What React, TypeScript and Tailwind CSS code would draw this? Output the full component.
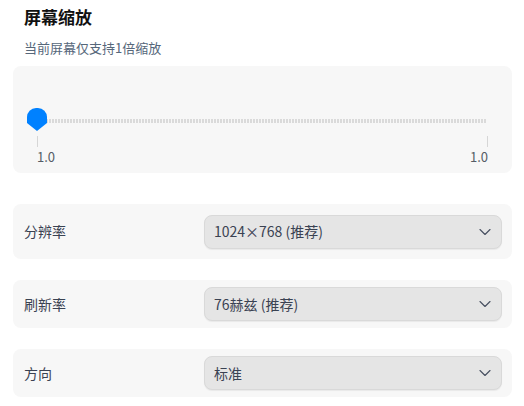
import { ChevronDown } from "lucide-react";

const font = { fontFamily: '"Noto Sans CJK SC", "Noto Sans", sans-serif' };

function SelectRow({ label, value, tall }: { label: string; value: string; tall?: boolean }) {
  return (
    <div
      className={`flex items-center rounded-lg bg-[#f7f7f7] pl-[11px] pr-[10px] ${
        tall ? "h-[55px]" : "h-[48px]"
      }`}
    >
      <div className="w-[180px] text-[14px] text-[#3a4252]">{label}</div>
      <button className="flex h-[34px] flex-1 items-center justify-between rounded-lg border border-[#d9d9d9] bg-[#e5e5e5] pl-[9px] pr-[6px] text-[14px] text-[#3a4252] shadow-[0_1px_1px_rgba(0,0,0,0.06)]">
        <span>{value}</span>
        <ChevronDown className="size-[20px] text-[#4a5263]" strokeWidth={1.4} />
      </button>
    </div>
  );
}

function ScaleSlider() {
  return (
    <div className="h-[107px] rounded-lg bg-[#f7f7f7] px-[24px] pt-[42px]">
      <div className="relative h-[24px]">
        <div className="absolute left-0 right-[1px] top-[11px] h-[4px] bg-[repeating-linear-gradient(90deg,#dadada_0_2px,transparent_2px_3px)]" />
        <svg className="absolute left-[-10px] top-0" width="20" height="24" viewBox="0 0 20 24">
          <path d="M0 9 A9 9 0 0 1 9 0 H11 A9 9 0 0 1 20 9 V15 L10 23 L0 15 Z" fill="#0081ff" />
        </svg>
      </div>
      <div className="mt-[4px] flex justify-between">
        <div className="h-[11px] w-px bg-[#d6d6d6]" />
        <div className="h-[11px] w-px bg-[#d6d6d6]" />
      </div>
      <div className="mt-[1px] flex justify-between text-[13px] leading-[17px] text-[#555c66]">
        <span>1.0</span>
        <span>1.0</span>
      </div>
    </div>
  );
}

export default function App() {
  return (
    <div className="h-[406px] w-[524px] bg-white pl-[13px] pr-[12px]" style={font}>
      <div className="pl-[11px] pt-[4px]">
        <h1 className="text-[17px] font-bold leading-[26px] text-[#111]">屏幕缩放</h1>
        <p className="mt-[8px] text-[13px] leading-[20px] text-[#56677a]">当前屏幕仅支持1倍缩放</p>
      </div>
      <div className="mt-[8px]">
        <ScaleSlider />
      </div>
      <div className="mt-[31px] flex flex-col gap-[21px]">
        <SelectRow label="分辨率" value="1024×768 (推荐)" tall />
        <SelectRow label="刷新率" value="76赫兹 (推荐)" />
        <SelectRow label="方向" value="标准" />
      </div>
    </div>
  );
}
